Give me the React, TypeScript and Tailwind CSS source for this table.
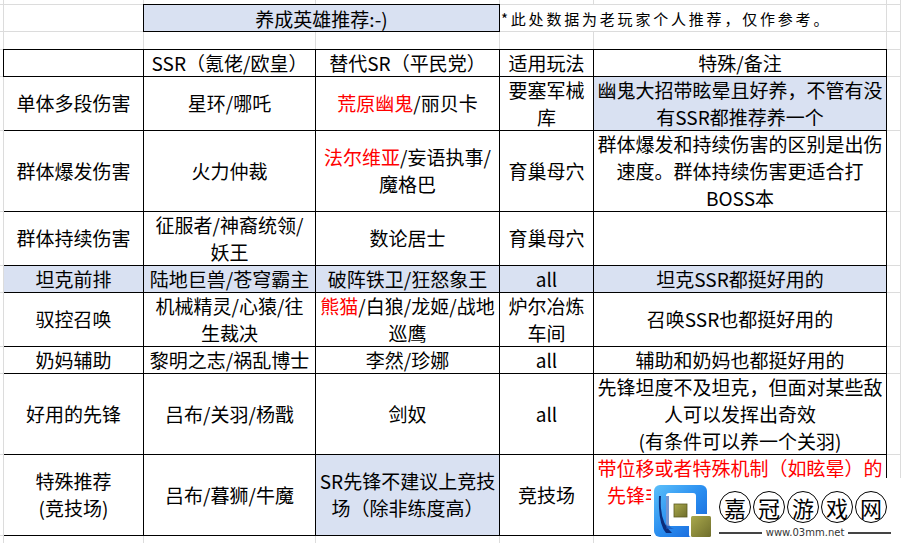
import React from "react";

const g = "border-r border-b border-[#dcdcdc]";
const gNoB = "border-r border-[#dcdcdc]";
const cell =
  "border-r border-b border-black flex items-center justify-center text-center text-[19px] leading-[27px] whitespace-nowrap pb-[2px]";
const blue = "bg-[#d9e1f2]";

const R = ({ children }: { children: React.ReactNode }) => (
  <span className="text-[#ff0000]">{children}</span>
);

type Row = { bg?: boolean; cells: React.ReactNode[]; bgIdx?: number[] };

const rows: Row[] = [
  { cells: ["", "SSR（氪佬/欧皇）", "替代SR（平民党）", "适用玩法", "特殊/备注"] },
  {
    bgIdx: [4],
    cells: [
      "单体多段伤害",
      "星环/哪吒",
      <>
        <R>荒原幽鬼</R>/丽贝卡
      </>,
      <>
        要塞军械
        <br />库
      </>,
      <>
        幽鬼大招带眩晕且好养，不管有没
        <br />
        有SSR都推荐养一个
      </>,
    ],
  },
  {
    cells: [
      "群体爆发伤害",
      "火力仲裁",
      <>
        <R>法尔维亚</R>/妄语执事/
        <br />
        魔格巴
      </>,
      "育巢母穴",
      <>
        群体爆发和持续伤害的区别是出伤
        <br />
        速度。群体持续伤害更适合打
        <br />
        BOSS本
      </>,
    ],
  },
  {
    cells: [
      "群体持续伤害",
      <>
        征服者/神裔统领/
        <br />
        妖王
      </>,
      "数论居士",
      "育巢母穴",
      "",
    ],
  },
  {
    bg: true,
    cells: ["坦克前排", "陆地巨兽/苍穹霸主", "破阵铁卫/狂怒象王", "all", "坦克SSR都挺好用的"],
  },
  {
    cells: [
      "驭控召唤",
      <>
        机械精灵/心猿/往
        <br />
        生裁决
      </>,
      <>
        <R>熊猫</R>/白狼/龙姬/战地
        <br />
        巡鹰
      </>,
      <>
        炉尔冶炼
        <br />
        车间
      </>,
      "召唤SSR也都挺好用的",
    ],
  },
  {
    cells: ["奶妈辅助", "黎明之志/祸乱博士", "李然/珍娜", "all", "辅助和奶妈也都挺好用的"],
  },
  {
    cells: [
      "好用的先锋",
      "吕布/关羽/杨戬",
      "剑奴",
      "all",
      <>
        先锋坦度不及坦克，但面对某些敌
        <br />
        人可以发挥出奇效
        <br />
        (有条件可以养一个关羽)
      </>,
    ],
  },
  {
    bgIdx: [2],
    cells: [
      <>
        特殊推荐
        <br />
        (竞技场)
      </>,
      "吕布/暮狮/牛魔",
      <>
        SR先锋不建议上竞技
        <br />
        场（除非练度高）
      </>,
      "竞技场",
      <div className="text-[#ff0000] flex flex-col items-center">
        <div>带位移或者特殊机制（如眩晕）的</div>
        <div className="w-[266px] text-left">先锋非</div>
        <div className="h-[27px]" />
      </div>,
    ],
  },
];

function Logo() {
  return (
    <svg width="58" height="54" viewBox="0 0 58 54">
      <defs>
        <linearGradient id="lb" x1="0" y1="0" x2="1" y2="1">
          <stop offset="0" stopColor="#5cc0fa" />
          <stop offset="0.5" stopColor="#2a8ef0" />
          <stop offset="1" stopColor="#1560d6" />
        </linearGradient>
        <linearGradient id="ol" x1="0" y1="0" x2="1" y2="1">
          <stop offset="0" stopColor="#a9a84c" />
          <stop offset="1" stopColor="#6f6e2c" />
        </linearGradient>
      </defs>
      <rect x="0" y="1" width="53" height="52" rx="6" fill="url(#lb)" />
      <path d="M7 12 Q5 38 18 49 L12 49 Q4 40 5 12 Z" fill="#0b2c7a" />
      <rect x="12" y="9" width="30" height="33" rx="3" fill="#ffffff" />
      <path d="M12 12 L15 12 L15 40 Q16 44 20 45 L12 45 Z" fill="#1b4fb0" opacity="0.6" />
      <rect x="20" y="20" width="13" height="13" fill="url(#ol)" />
      <rect x="20" y="20" width="13" height="13" fill="none" stroke="#5a5a20" strokeWidth="0.8" />
      <rect x="35" y="30" width="23" height="23" rx="2" fill="#ffffff" />
      <rect x="37" y="32" width="20" height="21" rx="1.5" fill="url(#ol)" />
    </svg>
  );
}

export default function App() {
  const right9 = Array.from({ length: 8 });
  return (
    <div className="relative w-[901px] h-[543px] overflow-hidden bg-white text-black font-['Noto_Sans_CJK_SC',sans-serif] grid grid-cols-[4px_140px_172px_184px_94px_293px_1fr] grid-rows-[5px_27px_18px_27px_54px_81px_54px_27px_54px_27px_81px_81px_1fr]">
      {/* row 0 */}
      <div className={g} />
      <div className={g} />
      <div className={g} />
      <div className={g} />
      <div className={g} />
      <div className={g} />
      <div className={g} />
      {/* row 1 */}
      <div className={g} />
      <div className={g} />
      <div className="col-span-2 -ml-px -mt-px border border-black bg-[#d9e1f2] flex items-center justify-center text-[19px] leading-[27px] pt-[1px]">
        养成英雄推荐:-)
      </div>
      <div className="col-span-2 border-r border-b border-[#dcdcdc] flex items-center pl-[1px] pt-[3px] text-[15px] tracking-[2.8px] whitespace-nowrap">
        *此处数据为老玩家个人推荐，仅作参考。
      </div>
      <div className={g} />
      {/* row 2 */}
      <div className={g} />
      <div className={g} />
      <div className={g} />
      <div className={g} />
      <div className={g} />
      <div className={g} />
      <div className={g} />
      {/* rows 3-11 */}
      <div className={g} />
      <div className="col-span-5 row-span-9 -ml-px -mt-px border-l border-t border-black grid grid-cols-[140px_172px_184px_94px_293px] grid-rows-[27px_54px_81px_54px_27px_54px_27px_81px_81px]">
        {rows.map((row, ri) =>
          row.cells.map((c, ci) => (
            <div
              key={ri + "-" + ci}
              className={cell + (row.bg || (row.bgIdx && row.bgIdx.includes(ci)) ? " " + blue : "")}
            >
              <div>{c}</div>
            </div>
          ))
        )}
      </div>
      <div className={g} />
      {right9.map((_, i) => (
        <React.Fragment key={i}>
          <div className={g} />
          <div className={g} />
        </React.Fragment>
      ))}
      {/* row 12 */}
      <div className={gNoB} />
      <div className={gNoB} />
      <div className={gNoB} />
      <div className={gNoB} />
      <div className={gNoB} />
      <div className={gNoB} />
      <div className={gNoB} />

      {/* watermark overlay */}
      <div className="absolute left-[651px] top-[478px] w-[250px] h-[65px] bg-white flex items-start">
        <div className="ml-[3px] mt-[6px]">
          <Logo />
        </div>
        <div className="ml-[7px] mt-[13px] flex flex-col w-[172px]">
          <div className="flex gap-[2px]">
            {["嘉", "冠", "游", "戏", "网"].map((ch) => (
              <div
                key={ch}
                className="w-[32px] h-[32px] rounded-full border-[1.5px] border-black flex items-center justify-center text-[22px] leading-none"
              >
                {ch}
              </div>
            ))}
          </div>
          <div className="flex items-center mt-[5px]">
            <div className="flex-1 h-[2px] bg-[#444]" />
            <span className="px-[4px] text-[10px] leading-none text-[#333] font-['DejaVu_Sans',sans-serif]">
              www.03mm.net
            </span>
            <div className="flex-1 h-[2px] bg-[#444]" />
          </div>
        </div>
      </div>
    </div>
  );
}
